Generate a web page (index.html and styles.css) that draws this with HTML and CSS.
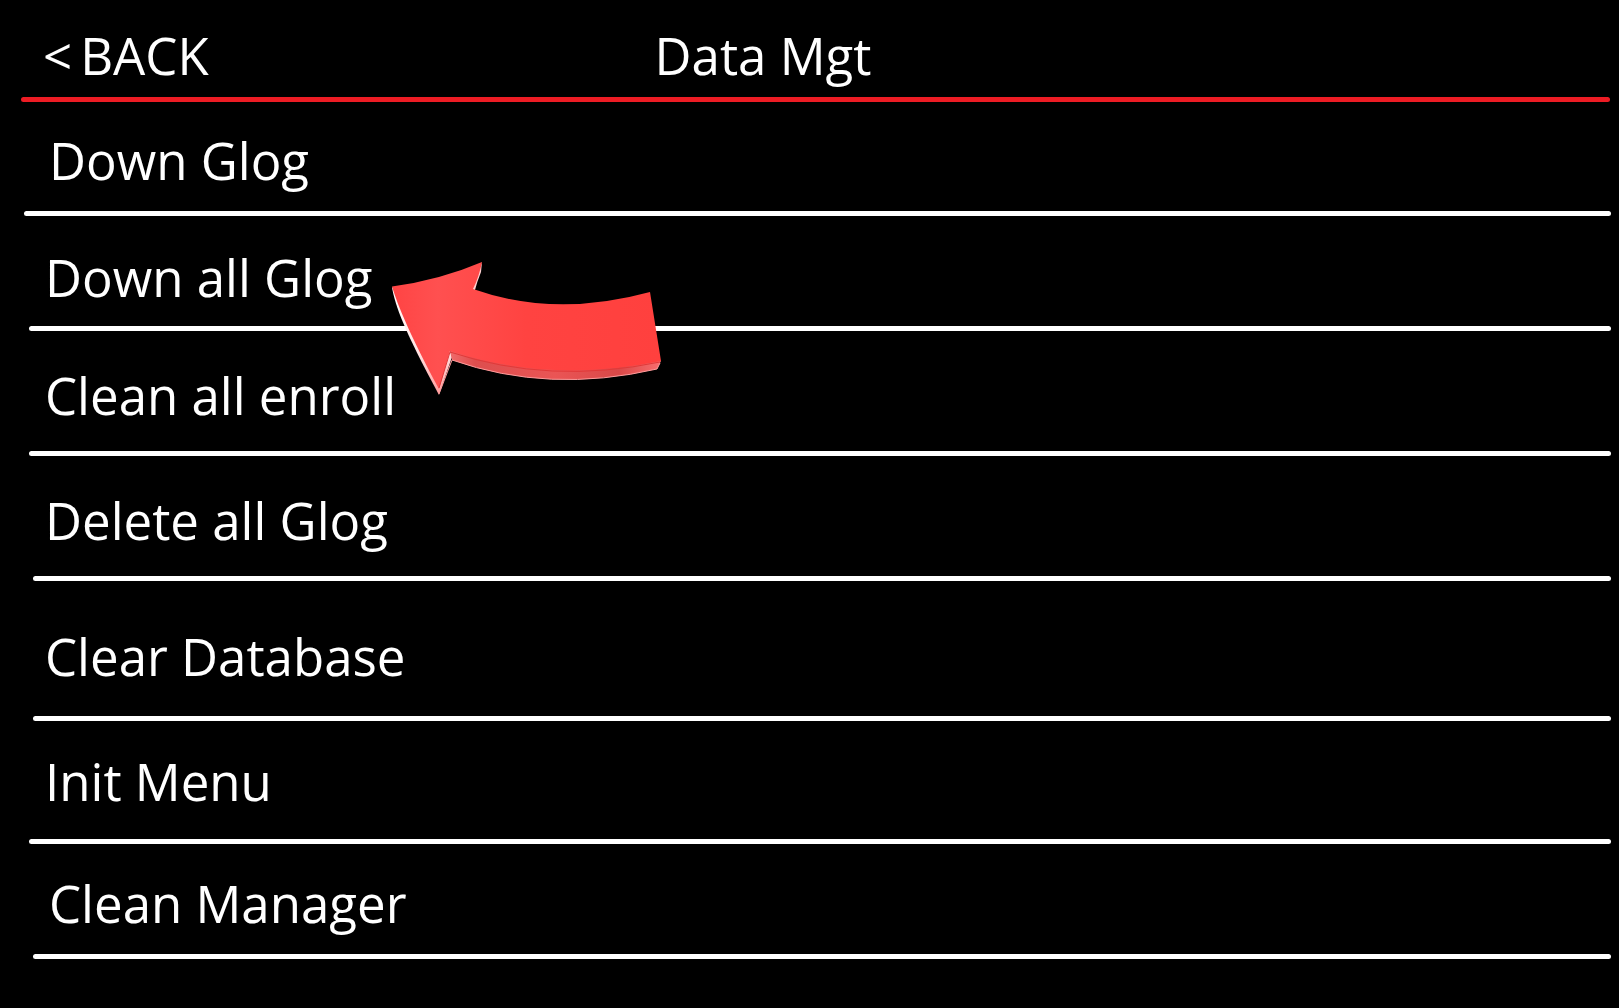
FILE: index.html
```html
<!DOCTYPE html>
<html lang="en">
<head>
    <meta charset="UTF-8">
    <title>Data Mgt</title>
    <link rel="stylesheet" href="styles.css">
</head>
<body>
    <header class="top-bar">
        <button class="back" type="button"><span>&lt;</span><span>BACK</span></button>
        <h1 class="title">Data Mgt</h1>
    </header>

    <ul class="menu">
        <li class="row wide"><button type="button">Down Glog</button></li>
        <li class="row">
            <button type="button">Down all Glog</button>
            <!-- Arrow pointing at the current step -->
            <svg class="arrow" viewBox="22 23 270 133" aria-hidden="true">
                <defs>
                    <linearGradient id="face" x1="0" y1="0" x2="1" y2="0">
                        <stop offset="0" stop-color="#ff4444"/>
                        <stop offset="0.17" stop-color="#ff5050"/>
                        <stop offset="0.5" stop-color="#ff4341"/>
                        <stop offset="1" stop-color="#ff403e"/>
                    </linearGradient>
                    <linearGradient id="side" x1="0" y1="0" x2="1" y2="0">
                        <stop offset="0" stop-color="#f06a6a"/>
                        <stop offset="0.12" stop-color="#dd4e4e"/>
                        <stop offset="0.5" stop-color="#ea5555"/>
                        <stop offset="0.8" stop-color="#d94848"/>
                        <stop offset="1" stop-color="#f96e6e"/>
                    </linearGradient>
                    <linearGradient id="edge" x1="0" y1="0" x2="0" y2="1">
                        <stop offset="0" stop-color="#ffffff"/>
                        <stop offset="0.6" stop-color="#ffe4e4"/>
                        <stop offset="1" stop-color="#ff9a9a"/>
                    </linearGradient>
                </defs>
                <path fill="url(#edge)" d="M22 48 C25 67 35 93 69 156 L82 118 L80 112 L60 80 Z"/>
                <path fill="#ffd0d0" d="M112 23 L111 33 Q107 43 105 51 L102 51 Z"/>
                <path fill="url(#side)" d="M80 112 L82 121 Q179 155 287 130 L291 122 L200 110 Z"/>
                <path fill="url(#face)" d="M22 47.500 Q70 41 112 23 Q109 38 103 50 Q185 79 280 53 L291 122 Q180 145 80 112 L69 150 C40 96 28 67 22 47.500 Z"/>
                <path fill="none" stroke="#e23838" stroke-width="1" d="M69 149 L80 113 Q180 146 290 123"/>
                <path fill="none" stroke="#ff9c9c" stroke-width="1" d="M69 155 L82 121 Q179 155 287 130 L290 124"/>
            </svg>
        </li>
        <li class="row medium"><button type="button">Clean all enroll</button></li>
        <li class="row medium inset"><button type="button">Delete all Glog</button></li>
        <li class="row tall inset"><button type="button">Clear Database</button></li>
        <li class="row low"><button type="button">Init Menu</button></li>
        <li class="row inset last"><button type="button">Clean Manager</button></li>
    </ul>
</body>
</html>
```
FILE: styles.css
```css
body {
    margin: 0;
    background-color: #000;
    color: #fff;
    font-family: 'Open Sans', 'Noto Sans', sans-serif;
    font-size: 51px;
    line-height: 60px;
}

button {
    padding: 0;
    border: 0;
    background: none;
    color: inherit;
    font: inherit;
    text-align: left;
    cursor: pointer;
}

.top-bar {
    display: grid;
    grid-template-columns: 40% 1fr;
    align-items: center;
    padding-top: 25px;
}

.top-bar::after {
    content: "";
    grid-column: 1 / -1;
    height: 5px;
    margin: 12px 9px 0 21px;
    border-radius: 3px;
    background-color: #ed1c24;
}

.back {
    display: flex;
    gap: 8px;
    padding-left: 43px;
}

.title {
    margin: 0;
    padding-left: 7px;
    font-size: 51px;
    font-weight: 400;
}

.menu {
    margin: 0;
    padding: 0;
    list-style: none;
}

.row {
    position: relative;
    display: flex;
    flex-direction: column;
    padding-top: 31px;
}

.row button {
    padding: 0 0 19px 45px;
}

.row::after {
    content: "";
    height: 5px;
    margin: 0 8px 0 29px;
    border-radius: 3px;
    background-color: #fff;
}

.row.medium {
    padding-top: 34px;
}

.medium button {
    padding-bottom: 26px;
}

.row.tall {
    padding-top: 45px;
}

.tall button {
    padding-bottom: 30px;
}

.row.low {
    padding-top: 30px;
}

.low button {
    padding-bottom: 28px;
}

.row.wide,
.row.last {
    padding-top: 28px;
}

.wide button,
.last button {
    padding-bottom: 21px;
    padding-left: 49px;
}

.row.last {
    padding-top: 29px;
}

.wide::after {
    margin-left: 24px;
}

.inset::after {
    margin-left: 33px;
}

.arrow {
    position: absolute;
    top: 46px;
    left: 392px;
    width: 270px;
    z-index: 1;
    pointer-events: none;
}
```
